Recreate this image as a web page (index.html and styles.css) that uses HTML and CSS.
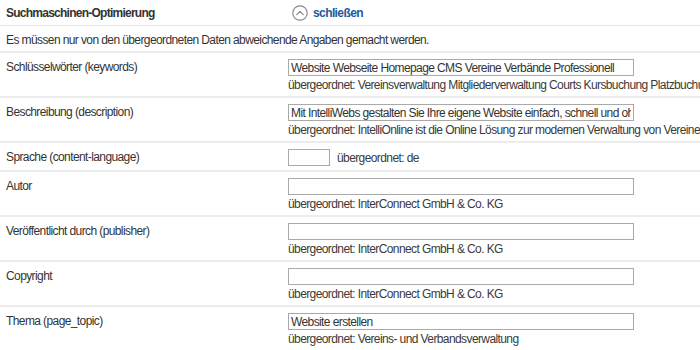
FILE: index.html
```html
<!DOCTYPE html>
<html lang="de">
<head>
<meta charset="utf-8">
<title>Suchmaschinen-Optimierung</title>
<link rel="stylesheet" href="styles.css">
</head>
<body>
<div class="panel">
  <div class="head">
    <div class="title">Suchmaschinen-Optimierung</div>
    <a class="toggle" href="#">
      <svg class="icon" width="16" height="16" viewBox="0 0 16 16"><circle cx="8" cy="8" r="7.2" fill="none" stroke="#8a8a8a" stroke-width="1.2"/><path d="M4.8 9.6 L8 6.4 L11.2 9.6" fill="none" stroke="#8a8a8a" stroke-width="1.3" stroke-linecap="round" stroke-linejoin="round"/></svg>
      <span>schließen</span>
    </a>
  </div>
  <div class="note">Es müssen nur von den übergeordneten Daten abweichende Angaben gemacht werden.</div>

  <div class="row">
    <div class="label">Schlüsselwörter (keywords)</div>
    <div class="field">
      <input class="txt" type="text" value="Website Webseite Homepage CMS Vereine Verbände Professionell">
      <div class="parent">übergeordnet: Vereinsverwaltung Mitgliederverwaltung Courts Kursbuchung Platzbuchung Vereinssoftware</div>
    </div>
  </div>

  <div class="row">
    <div class="label">Beschreibung (description)</div>
    <div class="field">
      <input class="txt" type="text" value="Mit IntelliWebs gestalten Sie Ihre eigene Website einfach, schnell und ohne Programmierkenntnisse.">
      <div class="parent">übergeordnet: IntelliOnline ist die Online Lösung zur modernen Verwaltung von Vereinen und Verbänden.</div>
    </div>
  </div>

  <div class="row">
    <div class="label">Sprache (content-language)</div>
    <div class="field inline">
      <input class="txt short" type="text" value="">
      <span class="parent-inline">übergeordnet: de</span>
    </div>
  </div>

  <div class="row">
    <div class="label">Autor</div>
    <div class="field">
      <input class="txt" type="text" value="">
      <div class="parent">übergeordnet: InterConnect GmbH &amp; Co. KG</div>
    </div>
  </div>

  <div class="row">
    <div class="label">Veröffentlicht durch (publisher)</div>
    <div class="field">
      <input class="txt" type="text" value="">
      <div class="parent">übergeordnet: InterConnect GmbH &amp; Co. KG</div>
    </div>
  </div>

  <div class="row">
    <div class="label">Copyright</div>
    <div class="field">
      <input class="txt" type="text" value="">
      <div class="parent">übergeordnet: InterConnect GmbH &amp; Co. KG</div>
    </div>
  </div>

  <div class="row">
    <div class="label">Thema (page_topic)</div>
    <div class="field">
      <input class="txt" type="text" value="Website erstellen">
      <div class="parent">übergeordnet: Vereins- und Verbandsverwaltung</div>
    </div>
  </div>
</div>
</body>
</html>
```

FILE: styles.css
```css
html, body {
  margin: 0;
  padding: 0;
  background: #ffffff;
  overflow: hidden;
}
body {
  font-family: "Liberation Sans", Arial, sans-serif;
  font-size: 12px;
  letter-spacing: -0.6px;
  color: #333333;
}
.panel {
  width: 700px;
}
.head {
  display: grid;
  grid-template-columns: 292px 1fr;
  align-items: center;
  height: 25px;
  border-bottom: 1px solid #e4e4e4;
}
.title {
  padding-left: 6px;
  font-weight: bold;
  letter-spacing: -0.75px;
  color: #333333;
}
.toggle {
  display: flex;
  align-items: center;
  gap: 5px;
  text-decoration: none;
  color: #24599a;
  font-weight: bold;
  letter-spacing: -0.6px;
}
.icon {
  display: block;
}
.note {
  padding: 7px 6px 0 6px;
  height: 18px;
  border-bottom: 2px solid #ececec;
  white-space: nowrap;
}
.row {
  display: grid;
  grid-template-columns: 288px 1fr;
  padding: 6px 0 4px 0;
  border-bottom: 2px solid #ececec;
}
.label {
  padding-left: 6px;
  line-height: 17px;
  white-space: nowrap;
}
.field {
  display: flex;
  flex-direction: column;
  gap: 2px;
  white-space: nowrap;
  min-width: 0;
}
.field.inline {
  flex-direction: row;
  align-items: center;
  gap: 7px;
}
.txt {
  box-sizing: border-box;
  width: 346px;
  height: 17px;
  margin: 0;
  padding: 0 2px;
  border: 1px solid #a9a9a9;
  font-family: "Liberation Sans", Arial, sans-serif;
  font-size: 12px;
  letter-spacing: -0.6px;
  color: #333333;
  background: #ffffff;
  outline: none;
}
.txt.short {
  width: 42px;
}
.parent {
  line-height: 14px;
  color: #3a3a3a;
}
.parent-inline {
  color: #3a3a3a;
}
```
